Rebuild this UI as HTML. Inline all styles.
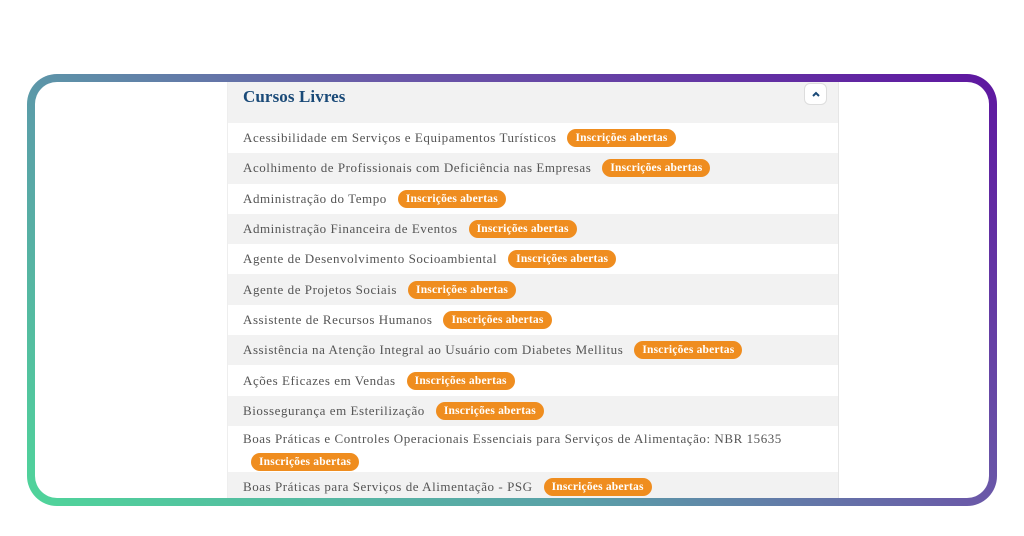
<!DOCTYPE html>
<html><head><meta charset="utf-8"><style>
*{margin:0;padding:0;box-sizing:border-box}
body{width:1024px;height:536px;background:#fff;position:relative;overflow:hidden;font-family:"Liberation Serif",serif}
.frame{position:absolute;left:27px;top:74px;width:970px;height:432px;border-radius:30px;background:linear-gradient(35deg,#4fd59a 0%,#5aa0a8 35%,#6a5aa8 60%,#5e16a0 100%)}
.inner{position:absolute;left:8px;top:8px;right:8px;bottom:8px;background:#fff;border-radius:22px;overflow:hidden}
.panel{position:absolute;left:192px;top:0;width:612px;height:420px;border-right:1px solid #e6e6e6;border-left:1px solid #eee}
.hdr{height:41px;background:#f2f2f2;position:relative}
.hdr h2{position:absolute;left:15px;top:5px;font-size:17px;color:#1a4a78;font-weight:bold;letter-spacing:.1px}
.btn{position:absolute;left:576px;top:1px;width:23px;height:22px;background:#fff;border:1px solid #ddd;border-radius:6px}
.btn svg{position:absolute;left:6px;top:6px}
.row{height:30.3px;display:flex;align-items:center;padding-left:15px;font-size:13px;color:#555;letter-spacing:.55px}
.row:nth-child(even){background:#f2f2f2}
.b{display:inline-block;background:#ef8d1f;color:#fff;font-weight:bold;font-size:11.5px;height:18px;line-height:18px;padding:0 8px;border-radius:9px;margin-left:11px;letter-spacing:0.2px}
.two{height:46px;display:block;padding-top:4px;line-height:17px}
.two .b{margin-left:8px;margin-top:6px}
</style></head><body>
<div class="frame"><div class="inner"><div class="panel">
<div class="hdr"><h2>Cursos Livres</h2><div class="btn"><svg width="10" height="8" viewBox="0 0 10 8"><path d="M2 6L5 3L8 6" stroke="#1a4a78" stroke-width="2" fill="none"/></svg></div></div>
<div>
<div class="row">Acessibilidade em Serviços e Equipamentos Turísticos<span class="b">Inscrições abertas</span></div>
<div class="row">Acolhimento de Profissionais com Deficiência nas Empresas<span class="b">Inscrições abertas</span></div>
<div class="row">Administração do Tempo<span class="b">Inscrições abertas</span></div>
<div class="row">Administração Financeira de Eventos<span class="b">Inscrições abertas</span></div>
<div class="row">Agente de Desenvolvimento Socioambiental<span class="b">Inscrições abertas</span></div>
<div class="row">Agente de Projetos Sociais<span class="b">Inscrições abertas</span></div>
<div class="row">Assistente de Recursos Humanos<span class="b">Inscrições abertas</span></div>
<div class="row">Assistência na Atenção Integral ao Usuário com Diabetes Mellitus<span class="b">Inscrições abertas</span></div>
<div class="row">Ações Eficazes em Vendas<span class="b">Inscrições abertas</span></div>
<div class="row">Biossegurança em Esterilização<span class="b">Inscrições abertas</span></div>
<div class="row two">Boas Práticas e Controles Operacionais Essenciais para Serviços de Alimentação: NBR 15635<br><span class="b">Inscrições abertas</span></div>
<div class="row">Boas Práticas para Serviços de Alimentação - PSG<span class="b">Inscrições abertas</span></div>
</div>
</div></div></div>
</body></html>
